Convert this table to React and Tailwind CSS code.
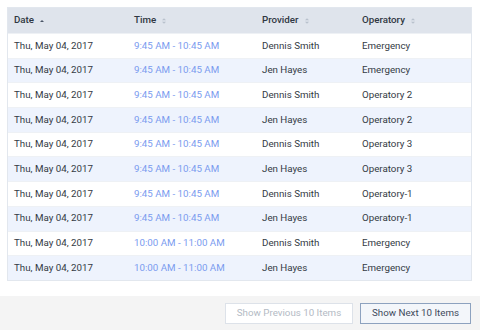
const rows = [
  ['Thu, May 04, 2017', '9:45 AM - 10:45 AM', 'Dennis Smith', 'Emergency'],
  ['Thu, May 04, 2017', '9:45 AM - 10:45 AM', 'Jen Hayes', 'Emergency'],
  ['Thu, May 04, 2017', '9:45 AM - 10:45 AM', 'Dennis Smith', 'Operatory 2'],
  ['Thu, May 04, 2017', '9:45 AM - 10:45 AM', 'Jen Hayes', 'Operatory 2'],
  ['Thu, May 04, 2017', '9:45 AM - 10:45 AM', 'Dennis Smith', 'Operatory 3'],
  ['Thu, May 04, 2017', '9:45 AM - 10:45 AM', 'Jen Hayes', 'Operatory 3'],
  ['Thu, May 04, 2017', '9:45 AM - 10:45 AM', 'Dennis Smith', 'Operatory-1'],
  ['Thu, May 04, 2017', '9:45 AM - 10:45 AM', 'Jen Hayes', 'Operatory-1'],
  ['Thu, May 04, 2017', '10:00 AM - 11:00 AM', 'Dennis Smith', 'Emergency'],
  ['Thu, May 04, 2017', '10:00 AM - 11:00 AM', 'Jen Hayes', 'Emergency'],
];

function SortIcon({ active }) {
  if (active) {
    return (
      <svg width="6" height="6" viewBox="0 0 6 6" className="ml-[5px]">
        <path d="M1 4 L3 2 L5 4 Z" fill="#4a5566" />
      </svg>
    );
  }
  return (
    <svg width="6" height="8" viewBox="0 0 6 8" className="ml-[5px]">
      <path d="M1 3.3 L3 1.3 L5 3.3 Z" fill="#b8c0cc" />
      <path d="M1 4.7 L3 6.7 L5 4.7 Z" fill="#b8c0cc" />
    </svg>
  );
}

const cols = ['w-[120px]', 'w-[128px]', 'w-[100px]', 'flex-1'];
const heads = ['Date', 'Time', 'Provider', 'Operatory'];

export default function App() {
  return (
    <div className="w-[480px] h-[330px] bg-white flex flex-col text-[9.75px] text-[#333a44]" style={{ fontFamily: 'Roboto, "Liberation Sans", sans-serif' }}>
      <div className="pt-[7px] px-[7px] bg-white">
        <div className="w-[465px] border border-[#e2e7ee]">
          <div className="flex h-[25px] items-center bg-[#dfe4ec] font-medium text-[#2f3742]">
            {heads.map((h, i) => (
              <div key={h} className={`${cols[i]} pl-[6px] flex items-center`}>
                {h}
                <SortIcon active={i === 0} />
              </div>
            ))}
          </div>
          {rows.map((r, ri) => (
            <div key={ri} className={`flex h-[24.7px] items-center border-t border-[#eef1f5] ${ri % 2 === 1 ? 'bg-[#eef3fd]' : 'bg-white'}`}>
              {r.map((c, ci) => (
                <div key={ci} className={`${cols[ci]} pl-[6px] ${ci === 1 ? 'text-[#7a9bef]' : ''}`}>
                  {c}
                </div>
              ))}
            </div>
          ))}
        </div>
      </div>
      <div className="h-[15px]" />
      <div className="flex-1 bg-[#f4f4f4] flex justify-end items-start gap-[7px] pt-[7px] pr-[9px]">
        <button type="button" className="h-[21px] w-[128px] border border-[#dde2e9] bg-white text-[#b3bac4] text-[9.75px]">
          Show Previous 10 Items
        </button>
        <button type="button" className="h-[21px] w-[111px] border border-[#8da2bf] bg-[#f3f6fa] text-[#3e4a5c] text-[9.75px]">
          Show Next 10 Items
        </button>
      </div>
    </div>
  );
}
